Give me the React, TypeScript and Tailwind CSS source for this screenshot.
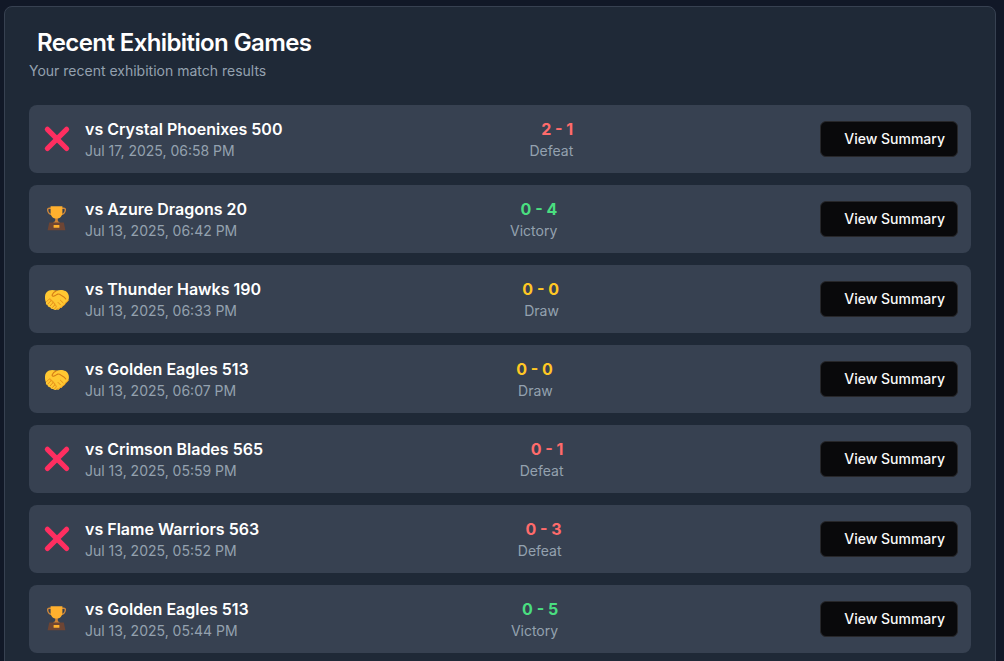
type Outcome = 'Victory' | 'Defeat' | 'Draw';

interface Game {
  opponent: string;
  date: string;
  score: string;
  outcome: Outcome;
}

const games: Game[] = [
  { opponent: 'Crystal Phoenixes 500', date: 'Jul 17, 2025, 06:58 PM', score: '2 - 1', outcome: 'Defeat' },
  { opponent: 'Azure Dragons 20', date: 'Jul 13, 2025, 06:42 PM', score: '0 - 4', outcome: 'Victory' },
  { opponent: 'Thunder Hawks 190', date: 'Jul 13, 2025, 06:33 PM', score: '0 - 0', outcome: 'Draw' },
  { opponent: 'Golden Eagles 513', date: 'Jul 13, 2025, 06:07 PM', score: '0 - 0', outcome: 'Draw' },
  { opponent: 'Crimson Blades 565', date: 'Jul 13, 2025, 05:59 PM', score: '0 - 1', outcome: 'Defeat' },
  { opponent: 'Flame Warriors 563', date: 'Jul 13, 2025, 05:52 PM', score: '0 - 3', outcome: 'Defeat' },
  { opponent: 'Golden Eagles 513', date: 'Jul 13, 2025, 05:44 PM', score: '0 - 5', outcome: 'Victory' },
];

const scoreColor: Record<Outcome, string> = {
  Victory: 'text-[#4ade80]',
  Defeat: 'text-[#ff6b6b]',
  Draw: 'text-[#ffc724]',
};

function CrossIcon() {
  return (
    <svg viewBox="0 0 32 32" className="size-8" aria-hidden="true">
      <path d="M6.400 6.300 25.600 25.500M25.600 6.300 6.400 25.500" fill="none" stroke="#ff2e60" strokeWidth="5.200" strokeLinecap="round" />
    </svg>
  );
}

function TrophyIcon() {
  return (
    <svg viewBox="0 0 32 32" className="size-8" aria-hidden="true">
      <path
        d="M10.5 5.2H8.4C7 5.2 6.500 6 6.700 7.200 7 10 9 11.600 12 11.600M20.500 5.200h2.100c1.400 0 1.900.8 1.700 2C24 10 22 11.600 19 11.600"
        fill="none"
        stroke="#d0893a"
        strokeWidth="1.4"
      />
      <path d="M14.200 14h2.600v3.200c0 1 .6 1.600 1.700 1.900v1h-6v-1c1.100-.3 1.700-.9 1.700-1.900Z" fill="#cf8438" />
      <path d="M9.600 3.300h11.800v6.100c0 3.700-2.400 6.200-5.900 6.200s-5.900-2.500-5.900-6.200Z" fill="#ffb02e" />
      <path d="M8.200 19.500h14.600L24.400 27.200H6.600Z" fill="#6d4534" />
      <rect x="12.600" y="21.900" width="5.800" height="2.800" rx=".3" fill="#ffb02e" />
    </svg>
  );
}

function HandshakeIcon() {
  return (
    <svg viewBox="0 0 32 32" className="size-8" aria-hidden="true">
      <path
        d="M8 7.600c2.400-1 4.800-.7 7.300.1 2.800-1 6.700-1.100 9.300.4 2.400 1.500 3.500 4 3.300 6.800-.2 2.400-1.600 4-3.400 5.200-.2 1.600-1.300 2.600-2.600 2.800-.5 1.400-1.600 2.100-2.900 2-.5 1.400-1.700 2.100-3 1.700-1.400.8-3 .5-3.900-.6-1.400.2-2.500-.5-2.900-1.800-1.600.1-2.600-.8-2.700-2.200-1.300-.2-1.900-1.300-1.500-2.600C4.100 17.800 3.900 15.300 4 13.200c.2-2.600 1.700-4.700 4-5.600Z"
        fill="#ffc832"
      />
      <path
        d="M27.400 17.200c-1 1.500-2.200 2.200-3.300 3.200-.3 1.400-1.100 1.900-2.300 2.200-.5 1.300-1.400 1.800-2.800 1.800-.5 1.300-1.500 1.800-2.900 1.400"
        fill="none"
        stroke="#f59f1c"
        strokeWidth="1"
        strokeLinecap="round"
      />
      <path
        d="M15.300 7.800c-1.900 1-3.500 2.300-4.100 3.900-.4 1.200.7 1.900 1.900 1.400 1.500-.6 2.300-1.600 3.700-2 1.600-.3 2.800.8 4.200 1.700 1.500.9 2.900 1.800 3.800 3.200"
        fill="none"
        stroke="#d67d16"
        strokeWidth="1.100"
        strokeLinecap="round"
        strokeLinejoin="round"
      />
      <path
        d="m5.600 18.600 2.300-2.300c1.200-1 2.600.1 2 1.500l-3 3.200M9.900 17.800c1.500-.6 2.700.7 2 2l-2.700 3M11.900 19.800c1.500-.4 2.500.9 1.700 2.200l-2 2.400M13.600 22c1.400-.2 2.200 1 1.400 2.200l-1.300 1.600M17 19.400l2.500 2.500M19.400 17.200l2.700 2.600"
        fill="none"
        stroke="#e38a17"
        strokeWidth=".9"
        strokeLinecap="round"
        strokeLinejoin="round"
      />
    </svg>
  );
}

function OutcomeIcon({ outcome }: { outcome: Outcome }) {
  if (outcome === 'Victory') return <TrophyIcon />;
  if (outcome === 'Defeat') return <CrossIcon />;
  return <HandshakeIcon />;
}

function GameRow({ game }: { game: Game }) {
  return (
    <li className="flex items-center justify-between rounded-lg bg-[#374151] p-3">
      <div className="flex items-center gap-3">
        <OutcomeIcon outcome={game.outcome} />
        <div>
          <p className="text-base font-semibold text-white">vs {game.opponent}</p>
          <p className="text-sm text-[#94a1af]">{game.date}</p>
        </div>
      </div>
      <div className="text-right">
        <p className={`text-base font-bold ${scoreColor[game.outcome]}`}>{game.score}</p>
        <p className="text-sm text-[#94a1af]">{game.outcome}</p>
      </div>
      <button
        type="button"
        className="h-9 rounded-md border border-[#27272a] bg-[#09090b] pr-3 pl-[23px] text-sm font-medium whitespace-nowrap text-[#fafafa] hover:bg-[#27272a] mr-px"
      >
        View Summary
      </button>
    </li>
  );
}

export default function App() {
  return (
    <main className="h-screen overflow-hidden bg-[#111827] px-1 pt-1.5 pr-2 font-[Inter,sans-serif]">
      <section className="rounded-lg border border-[#374151] bg-[#1f2937]">
        <header className="flex flex-col gap-1.5 p-6">
          <h1 className="pl-2 text-2xl leading-none font-semibold tracking-tight text-white">Recent Exhibition Games</h1>
          <p className="text-sm text-[#94a1af]">Your recent exhibition match results</p>
        </header>
        <ul className="flex flex-col gap-3 px-6 pb-6">
          {games.map((game) => (
            <GameRow key={game.date} game={game} />
          ))}
        </ul>
      </section>
    </main>
  );
}
